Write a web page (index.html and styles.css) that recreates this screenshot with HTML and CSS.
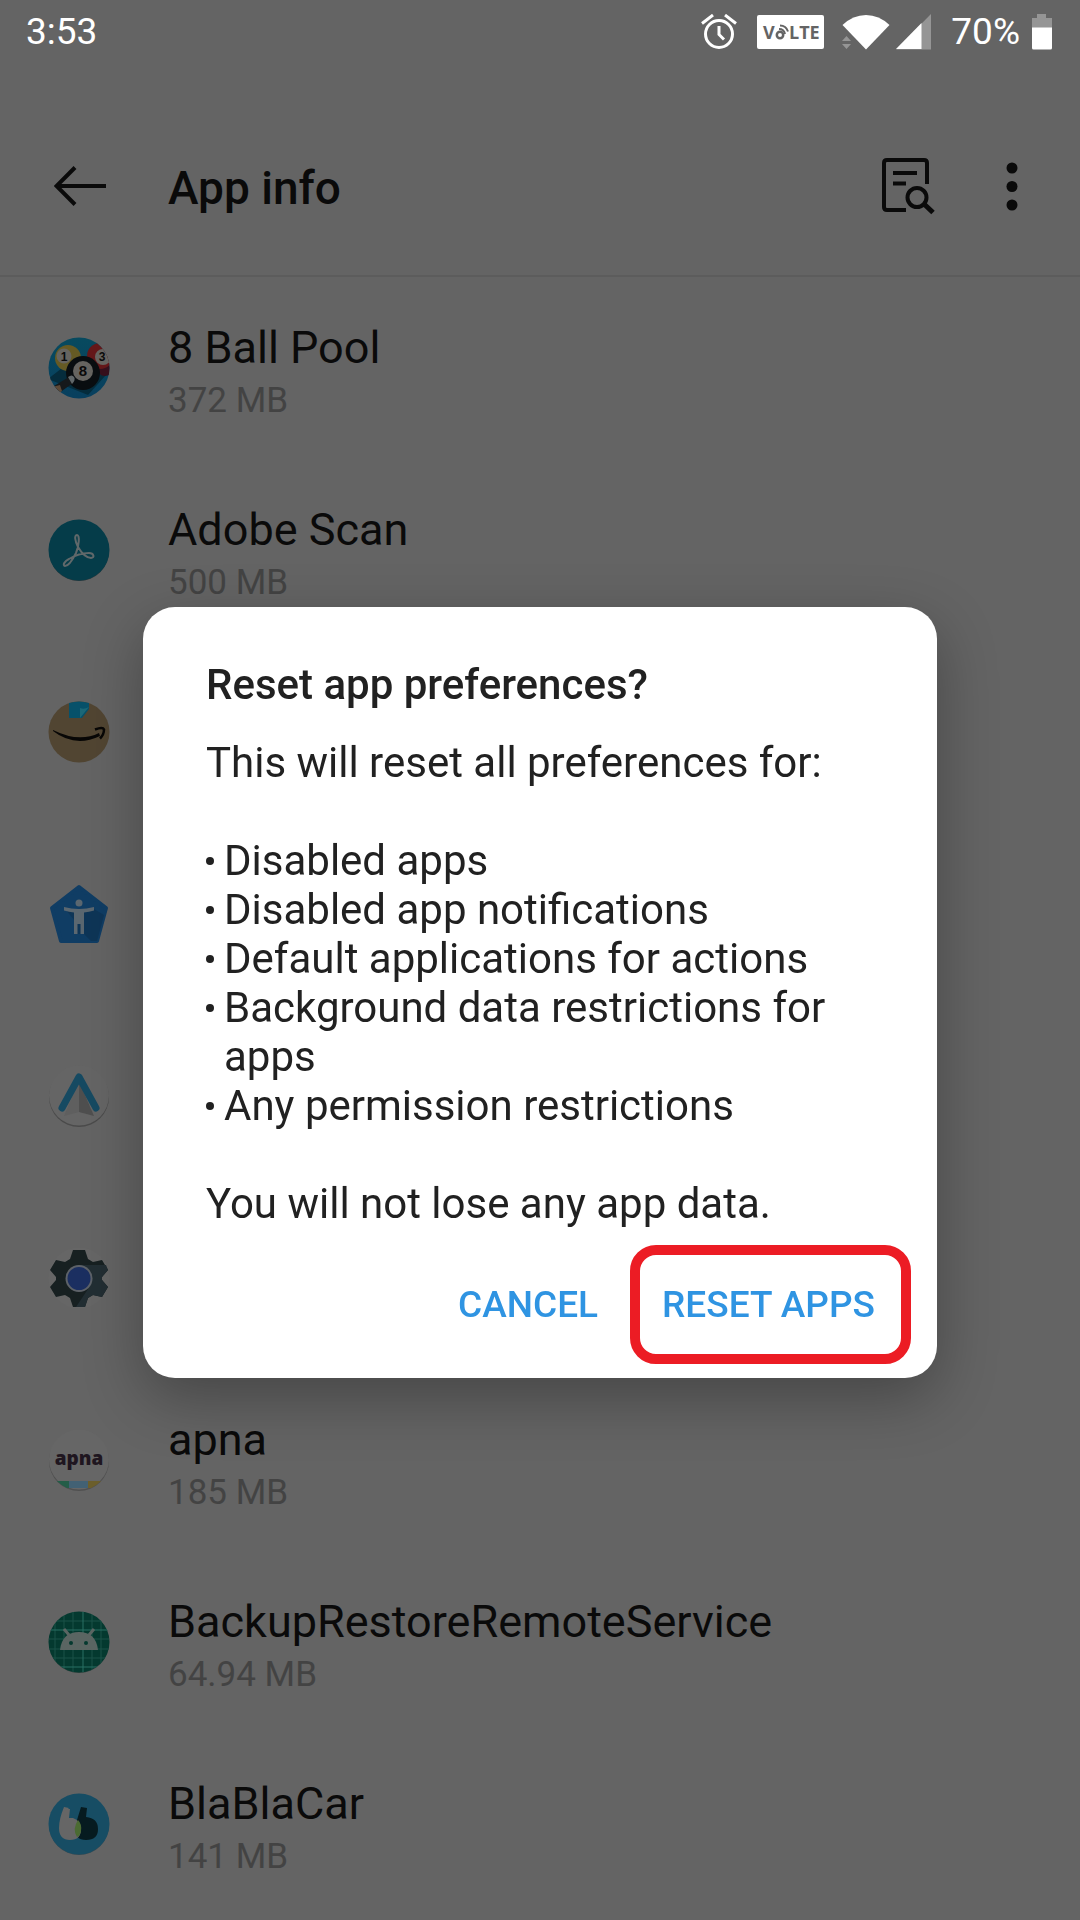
FILE: index.html
```html
<!DOCTYPE html>
<html lang="en">

<head>
    <meta charset="UTF-8">
    <meta name="viewport" content="width=device-width, initial-scale=1.0">
    <title>App info</title>
    <link rel="stylesheet" href="styles.css">
</head>

<body>
    <div class="status-bar">
        <span class="clock">3:53</span>
        <div class="status-icons">
            <svg class="alarm" width="36" height="36" viewBox="0 0 36 36" fill="none" stroke="#fff" stroke-width="3">
                <circle cx="18" cy="20" r="13.5" />
                <path d="M18 12v8.500l5 5" />
                <path d="M1 9.500L12 1M35 9.500L24 1" />
            </svg>
            <svg class="volte" width="67" height="34" viewBox="0 0 67 34">
                <rect width="67" height="34" rx="2" fill="#fff" />
                <text x="6" y="24" class="volte-text">V</text>
                <text x="32" y="24" class="volte-text">LTE</text>
                <g fill="none" stroke="#646464" stroke-width="2">
                    <circle cx="23" cy="20" r="3.200" stroke-width="2.500" />
                    <path d="M22 14q5 0 6 5M23 10.500q6 0 8 6" />
                </g>
            </svg>
            <svg class="wifi" width="48" height="36" viewBox="0 0 48 36">
                <path d="M24 35.500L.500 11Q11 1 24 1t23.500 10z" fill="#fff" />
                <path d="M0 27l4.500-5L9 27zM0 30l4.500 5L9 30z" fill="#959595" />
            </svg>
            <svg class="signal" width="35" height="36" viewBox="0 0 35 36">
                <path d="M0 35.500L35 0v35.500z" fill="#959595" />
                <path d="M0 35L25.500 9v26z" fill="#fff" />
            </svg>
            <span class="battery-level">70%</span>
            <svg class="battery" width="20" height="36" viewBox="0 0 20 36">
                <path d="M5 0h9v4h6v10H0V4h5z" fill="#959595" />
                <path d="M0 13.500h20V34q0 1.500-1.500 1.500h-17Q0 35.500 0 34z" fill="#fff" />
            </svg>
        </div>
    </div>

    <header class="toolbar">
        <a href="#" class="back" aria-label="Back">
            <svg width="52" height="40" viewBox="0 0 52 40" fill="none" stroke="#0a0a0a" stroke-width="4">
                <path d="M52 20H3M21 1.500L2.500 20 21 38.500" />
            </svg>
        </a>
        <h1>App info</h1>
        <button class="icon-button" aria-label="Search">
            <svg width="54" height="58" viewBox="0 0 54 58" fill="none" stroke="#0a0a0a" stroke-width="4">
                <path d="M24 53H5q-3 0-3-3V6q0-3 3-3h37q3 0 3 3v21" />
                <path d="M11 16h24M11 26.500h13" />
                <circle cx="35" cy="40.500" r="9.500" />
                <path d="M41.500 46.500L51 55.500" stroke-width="5" />
            </svg>
        </button>
        <button class="icon-button" aria-label="More options">
            <svg width="12" height="58" viewBox="0 0 12 58" fill="#0a0a0a">
                <circle cx="6" cy="11" r="5.500" />
                <circle cx="6" cy="29.500" r="5.500" />
                <circle cx="6" cy="48" r="5.500" />
            </svg>
        </button>
    </header>

    <main class="app-list">
        <div class="app-row">
            <svg class="app-icon" viewBox="0 0 62 62">
                <defs>
                    <clipPath id="round"><circle cx="31" cy="31" r="30.500" /></clipPath>
                    <linearGradient id="felt" x1="0" y1="0" x2="0" y2="1">
                        <stop offset="0" stop-color="#074a5f" />
                        <stop offset="1" stop-color="#083f5e" />
                    </linearGradient>
                </defs>
                <g clip-path="url(#round)">
                    <rect width="62" height="62" fill="url(#felt)" />
                    <path d="M0 42l18-14 40 10-18 20z" fill="#052c3c" />
                    <circle cx="20" cy="21" r="13" fill="#655a24" />
                    <circle cx="16" cy="19" r="7.500" fill="#666460" />
                    <circle cx="57" cy="31" r="8" fill="#360f1c" />
                    <circle cx="52" cy="19" r="13" fill="#641719" />
                    <circle cx="55" cy="20" r="8" fill="#666460" />
                    <circle cx="35" cy="36" r="17" fill="#090d10" />
                    <circle cx="35" cy="34" r="10" fill="#666460" />
                    <path d="M6 49l15-9 4 6-14 10z" fill="#16191b" />
                    <path d="M20 40q4-3 6 0t-2 7z" fill="#62686a" />
                    <path d="M4 50l8-2 2 6-7 5z" fill="#5d4937" />
                    <text x="16" y="24" class="ball-number">1</text>
                    <text x="54" y="24" class="ball-number">3</text>
                    <text x="35" y="39" class="ball-number ball-eight">8</text>
                </g>
            </svg>
            <div class="app-text">
                <div class="app-name">8 Ball Pool</div>
                <div class="app-size">372 MB</div>
            </div>
        </div>

        <div class="app-row">
            <svg class="app-icon" viewBox="0 0 62 62">
                <circle cx="31" cy="32" r="30" fill="#303a3d" />
                <circle cx="31" cy="31" r="30.500" fill="#053c49" />
                <path d="M29 16c-3 0-2 6 1 12 3 5 8 11 13 11 4 0 3-5-2-5-8 0-15 3-20 6-4 2-7 6-4 7 4 0 8-7 11-13 3-7 4-18 1-18z" fill="none" stroke="#60686a" stroke-width="2" />
            </svg>
            <div class="app-text">
                <div class="app-name">Adobe Scan</div>
                <div class="app-size">500 MB</div>
            </div>
        </div>

        <div class="app-row">
            <svg class="app-icon" viewBox="0 0 62 62">
                <circle cx="31" cy="31" r="30.500" fill="#514532" />
                <path d="M21 2q10-3 20 0v6l-7 9H21z" fill="#07516a" />
                <path d="M32 7q4 2 9-1l-9 11z" fill="#1c6878" />
                <path d="M5 29q26 13 46 3l1 3Q27 47 5 30z" fill="#080706" />
                <path d="M47 28.500q8-3 9 0 0 5-4 9" fill="none" stroke="#080706" stroke-width="2.500" />
            </svg>
        </div>

        <div class="app-row">
            <svg class="app-icon" viewBox="0 0 62 62">
                <path d="M31 4L58 25 49 58H13L4 25z" fill="#103d64" stroke="#103d64" stroke-width="4" stroke-linejoin="round" />
                <path d="M18 27l8 10v14h10l7 7h6l7-26-10-6z" fill="#0e3557" />
                <circle cx="31" cy="20" r="3.500" fill="#5b6770" />
                <path d="M16 24q15 4 30 0v3.500q-5 1.500-10 2V51h-3.500V41h-3v10H26V29.500q-5-.500-10-2z" fill="#5b6770" />
            </svg>
        </div>

        <div class="app-row">
            <svg class="app-icon" viewBox="0 0 62 62">
                <circle cx="31" cy="32" r="30" fill="#4b4b4b" />
                <circle cx="31" cy="30.500" r="30" fill="#656565" />
                <path d="M31 16L16 51l15-4z" fill="#5f5f5f" />
                <path d="M31 16l15 35-15-4z" fill="#4f4f4f" />
                <path d="M14 43L31 12l17 31" fill="none" stroke="#164a62" stroke-width="7" stroke-linecap="round" stroke-linejoin="round" />
            </svg>
        </div>

        <div class="app-row">
            <svg class="app-icon" viewBox="0 0 62 62">
                <circle cx="31" cy="31" r="30.500" fill="#666" />
                <path d="M25 3h12l3 9 5 3 9-2 6 10-6 7v3l6 7-6 10-9-2-5 3-3 9H25l-3-9-5-3-9 2L2 40l6-7v-3l-6-7L8 13l9 2 5-3z" fill="#172021" />
                <path d="M31 18h27l2 5-6 7v3l6 7-6 10-9-2-5 3-3 9H28l12-18z" fill="#222e33" />
                <circle cx="31" cy="31.500" r="13.500" fill="#5d6269" />
                <circle cx="31" cy="31.500" r="11.500" fill="#1b2f61" />
            </svg>
        </div>

        <div class="app-row">
            <svg class="app-icon" viewBox="0 0 62 62">
                <circle cx="31" cy="32" r="30" fill="#505050" />
                <circle cx="31" cy="30.500" r="30" fill="#666" />
                <g clip-path="url(#round)">
                    <path d="M8 52h13v7H8z" fill="#245d48" />
                    <path d="M21 52h19v7H21z" fill="#426174" />
                    <path d="M40 52h14v7H40z" fill="#6b5e2c" />
                </g>
                <text x="31" y="36" text-anchor="middle" class="apna-text">apna</text>
            </svg>
            <div class="app-text">
                <div class="app-name">apna</div>
                <div class="app-size">185 MB</div>
            </div>
        </div>

        <div class="app-row">
            <svg class="app-icon" viewBox="0 0 62 62">
                <circle cx="31" cy="32" r="30" fill="#3c4846" />
                <circle cx="31" cy="31" r="30.500" fill="#04392f" />
                <g clip-path="url(#round)" stroke="#1b5349" stroke-width="1" fill="none">
                    <path d="M7 0v62M16 0v62M25 0v62M44 0v62M53 0v62M0 10h62M0 28h62M0 38h62M0 47h62" />
                    <path d="M35 0v62M0 19h62M0 56h62" stroke="#287065" />
                </g>
                <path d="M12 39q2-18 19-18t19 18z" fill="#5a6562" />
                <path d="M21 24l-5-6M41 24l5-6" stroke="#5a6562" stroke-width="3" />
                <circle cx="23" cy="32" r="2" fill="#04392f" />
                <circle cx="38" cy="32" r="2" fill="#04392f" />
            </svg>
            <div class="app-text">
                <div class="app-name">BackupRestoreRemoteService</div>
                <div class="app-size">64.94 MB</div>
            </div>
        </div>

        <div class="app-row">
            <svg class="app-icon" viewBox="0 0 62 62">
                <circle cx="31" cy="32" r="30" fill="#3b4b52" />
                <circle cx="31" cy="31" r="30.500" fill="#174d64" />
                <path d="M33 14l6 1-1 9q12 1 12 12 0 11-12 11-11 0-11-11 0-6 2-9z" fill="#061b20" />
                <path d="M16 14l5 1-1 1h2l-1 9 4 0q8 3 8 11 0 11-11 11T11 35q0-9 5-21z" fill="#666" />
                <path d="M30 27q4 4 3 11-1 5-4 6-5-8 1-17z" fill="#4b6b32" />
            </svg>
            <div class="app-text">
                <div class="app-name">BlaBlaCar</div>
                <div class="app-size">141 MB</div>
            </div>
        </div>
    </main>

    <div class="dialog-layer">
        <div class="dialog" role="dialog" aria-labelledby="dialog-title">
            <h2 id="dialog-title">Reset app preferences?</h2>
            <p>This will reset all preferences for:</p>
            <ul>
                <li>Disabled apps</li>
                <li>Disabled app notifications</li>
                <li>Default applications for actions</li>
                <li>Background data restrictions for apps</li>
                <li>Any permission restrictions</li>
            </ul>
            <p>You will not lose any app data.</p>
            <div class="dialog-actions">
                <button class="dialog-button">CANCEL</button>
                <button class="dialog-button highlighted">RESET APPS</button>
            </div>
        </div>
    </div>
</body>

</html>
```
FILE: styles.css
```css
:root {
    --page: #646464;
    --text: #0a0a0a;
    --text-secondary: #434343;
    --accent: #2f94e2;
    --highlight: #ec1c24;
}

* {
    box-sizing: border-box;
}

body {
    margin: 0;
    min-height: 100vh;
    background-color: var(--page);
    color: var(--text);
    font-family: Roboto, "Liberation Sans", sans-serif;
    overflow: hidden;
}

h1,
h2,
p,
ul {
    margin: 0;
    padding: 0;
}

button {
    border: none;
    background: none;
    padding: 0;
    font-family: inherit;
    cursor: pointer;
}

svg {
    display: block;
    flex-shrink: 0;
}

.status-bar {
    display: flex;
    align-items: center;
    justify-content: space-between;
    height: 64px;
    padding: 0 28px 0 26px;
    color: #fff;
    font-size: 37px;
    line-height: 42px;
}

.status-icons {
    display: flex;
    align-items: center;
}

.volte {
    margin-left: 20px;
}

.volte-text {
    font-family: "Open Sans", sans-serif;
    font-size: 18px;
    font-weight: 700;
    fill: #646464;
}

.wifi {
    margin-left: 18px;
}

.signal {
    margin-left: 6px;
}

.battery-level {
    margin-left: 20px;
}

.battery {
    margin-left: 12px;
}

.toolbar {
    display: flex;
    align-items: center;
    height: 213px;
    padding: 32px 62px 0 54px;
    border-bottom: 2px solid #5c5c5c;
}

.toolbar h1 {
    flex: 1;
    margin-left: 62px;
    padding-top: 4px;
    font-size: 46px;
    font-weight: 500;
}

.icon-button + .icon-button {
    margin-left: 70px;
}

.app-row {
    display: flex;
    align-items: center;
    height: 182px;
    padding-left: 48px;
}

.app-icon {
    width: 62px;
    height: 62px;
}

.app-text {
    margin-left: 58px;
    padding-top: 10px;
}

.app-name {
    font-size: 45px;
    line-height: 56px;
}

.app-size {
    color: var(--text-secondary);
    font-size: 35px;
    line-height: 50px;
}

.ball-number {
    font-family: "Liberation Sans", sans-serif;
    font-size: 12px;
    font-weight: bold;
    text-anchor: middle;
    fill: #0a0a0a;
}

.ball-eight {
    font-size: 15px;
}

.apna-text {
    font-family: "Open Sans", sans-serif;
    font-size: 19px;
    font-weight: 800;
    fill: #1f1620;
}

/* dialog sits over the list, below the status bar */
.dialog-layer {
    position: fixed;
    top: 64px;
    right: 0;
    bottom: 0;
    left: 0;
    display: flex;
    align-items: center;
    justify-content: center;
    padding: 0 143px;
}

.dialog {
    width: 100%;
    padding: 53px 26px 14px 63px;
    border-radius: 32px;
    background-color: #fff;
    color: #212121;
    font-size: 42px;
    line-height: 49px;
    box-shadow: 0 20px 60px rgba(0, 0, 0, 0.3);
}

.dialog h2 {
    margin-bottom: 29px;
    font-size: 42px;
    font-weight: 500;
}

.dialog ul {
    margin: 49px 0;
    list-style: none;
}

.dialog li {
    position: relative;
    padding: 0 60px 0 18px;
}

.dialog li::before {
    content: "";
    position: absolute;
    top: 21px;
    left: 0;
    width: 8px;
    height: 8px;
    border-radius: 50%;
    background-color: #212121;
}

.dialog-actions {
    display: flex;
    justify-content: flex-end;
    gap: 32px;
    margin-top: 17px;
}

.dialog-button {
    color: var(--accent);
    font-size: 37px;
    font-weight: 500;
}

.highlighted {
    height: 119px;
    padding: 0 26px 0 22px;
    border: 10px solid var(--highlight);
    border-radius: 26px;
}
```
